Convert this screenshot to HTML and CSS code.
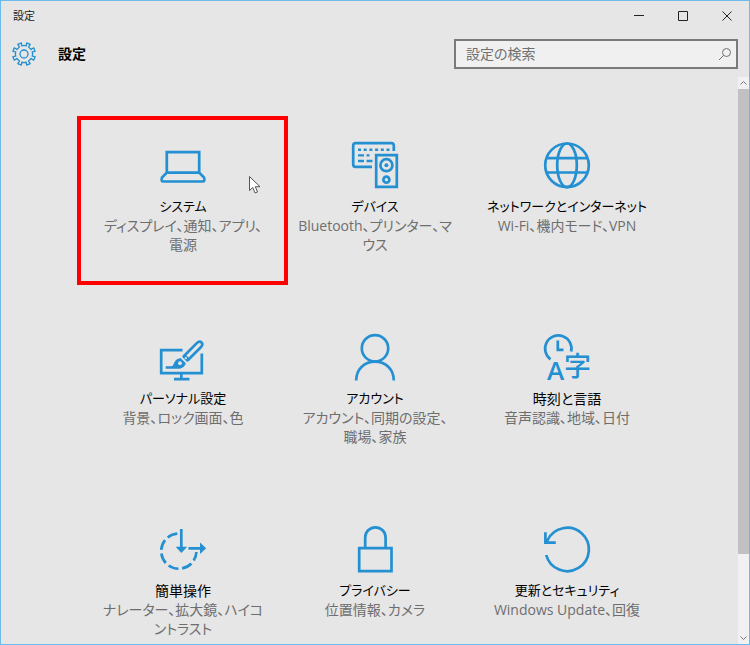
FILE: index.html
```html
<!DOCTYPE html>
<html lang="ja">
<head>
<meta charset="utf-8">
<meta name="viewport" content="width=device-width, initial-scale=1">
<title>設定</title>
<link rel="stylesheet" href="styles.css">
</head>
<body>
<div class="window">
  <div class="titlebar">
    <span class="titlebar-name">設定</span>
    <div class="controls">
      <button class="control" type="button" aria-label="最小化"><svg width="12" height="12" viewBox="0 0 12 12"><path d="M1 5.500h10"/></svg></button>
      <button class="control" type="button" aria-label="最大化"><svg width="12" height="12" viewBox="0 0 12 12"><path d="M1.500 1.500h9v9h-9z"/></svg></button>
      <button class="control" type="button" aria-label="閉じる"><svg width="12" height="12" viewBox="0 0 12 12"><path d="M1.500 1.500l9 9M10.500 1.500l-9 9"/></svg></button>
    </div>
  </div>

  <header class="header">
    <svg class="gear" width="24" height="24" viewBox="0 0 24 24" aria-hidden="true">
      <path d="M9.800 3.800L9.300.9L5.800 2.300L7.500 4.900L4.900 7.500L2.300 5.800L.9 9.300L3.800 9.800Q2.900 12 3.800 14.200L.9 14.700L2.300 18.200L4.900 16.500L7.500 19.100L5.800 21.700L9.300 23.100L9.800 20.200Q12 21.100 14.200 20.200L14.700 23.100L18.200 21.700L16.500 19.100L19.100 16.500L21.700 18.200L23.100 14.700L20.200 14.200Q21.100 12 20.200 9.800L23.100 9.300L21.700 5.800L19.100 7.500L16.500 4.900L18.200 2.300L14.700.9L14.200 3.800Q12 2.900 9.800 3.800Z"/>
      <circle cx="12" cy="12" r="4"/>
    </svg>
    <h1 class="heading">設定</h1>
    <form class="search" role="search">
      <input class="search-input" type="text" placeholder="設定の検索" aria-label="設定の検索">
      <button class="search-button" type="button" aria-label="検索"><svg width="14" height="14" viewBox="0 0 14 14"><circle cx="8.500" cy="5.500" r="4"/><path d="M5.600 8.400L1 13"/></svg></button>
    </form>
  </header>

  <div class="body">
    <main class="tiles">
      <a class="tile tile-marked" href="#">
        <svg class="icon" viewBox="0 0 48 48" aria-hidden="true"><path d="M7.800 11.200h32.400v20.400H7.800zM7.800 31.600L3 36.600Q1.600 40.500 4.500 40.500H43.500Q46.400 40.500 45 36.600L40.200 31.600"/></svg>
        <span class="name name-kana">システム</span>
        <span class="desc">ディスプレイ、通知、アプリ、<br>電源</span>
        <svg class="cursor" width="14" height="20" viewBox="0 0 14 20" aria-hidden="true"><path d="M1.500 1.500V15.500L4.800 12.500L7 18L9.500 17L7.300 11.700H12Z"/></svg>
      </a>
      <a class="tile" href="#">
        <svg class="icon" viewBox="0 0 48 48" aria-hidden="true">
          <path d="M42.800 10V4.500Q42.800 2.200 40.500 2.200H4.500Q2.200 2.200 2.200 4.500V23.500Q2.200 25.800 4.500 25.800H21M25.200 14.200H45.800V45.800H25.200z"/>
          <path class="keys" d="M7 8.700h3m2.700 0h3m2.700 0h3m2.700 0h3m2.700 0h3m2.700 0h3M7 14.400h6m2.500 0h3M7 20h6m2.500 0h6"/>
          <circle cx="35.400" cy="24.200" r="6"/><circle class="solid" cx="35.400" cy="24.200" r="2"/><circle cx="35.400" cy="38.700" r="3"/>
        </svg>
        <span class="name name-kana">デバイス</span>
        <span class="desc">Bluetooth、プリンター、マ<br>ウス</span>
      </a>
      <a class="tile" href="#">
        <svg class="icon" viewBox="0 0 48 48" aria-hidden="true"><circle cx="24" cy="24.300" r="21.800"/><ellipse cx="24" cy="24.300" rx="9.800" ry="21.800"/><path d="M3.500 17.200h41M3.500 31.500h41"/></svg>
        <span class="name name-kana">ネットワークとインターネット</span>
        <span class="desc">Wi-Fi、機内モード、VPN</span>
      </a>
      <a class="tile" href="#">
        <svg class="icon" viewBox="0 0 48 48" aria-hidden="true">
          <path d="M23.500 17.200H2.200V40.200H42.800V20.500M22.300 40v6M15 46.200h15.500"/>
          <path d="M25.500 22.500L37.800 10.100Q40.500 7.500 42.500 9.500T41.800 14.200L29.500 26.500Z"/>
          <path class="solid" d="M6.700 33.200H12.500C15 33 14.500 28.500 18 26.200L21.500 25L26.800 30.200C26 33.500 22.500 36 18 35.800H6.700ZM23 23.800L25.300 21.500L30.500 26.700L28.200 29Z"/>
          <circle class="hole" cx="21" cy="30.200" r="1.900"/><circle class="hole" cx="26.800" cy="25.200" r="1.100"/>
        </svg>
        <span class="name name-kana">パーソナル設定</span>
        <span class="desc">背景、ロック画面、色</span>
      </a>
      <a class="tile" href="#">
        <svg class="icon" viewBox="0 0 48 48" aria-hidden="true"><circle cx="24" cy="15.300" r="13.200"/><path d="M5.200 47.500C5.200 36.500 13 28.700 24 28.700S42.800 36.500 42.800 47.500"/></svg>
        <span class="name name-kana">アカウント</span>
        <span class="desc">アカウント、同期の設定、<br>職場、家族</span>
      </a>
      <a class="tile" href="#">
        <svg class="icon" viewBox="0 0 48 48" aria-hidden="true">
          <path d="M7.500 26.300A13.200 13.200 0 1 1 28.200 18.500M14.800 7.500V16.800H20.500"/>
          <text class="letter" x="12.500" y="46.500">A</text><text class="kanji" x="34.600" y="43">字</text>
        </svg>
        <span class="name">時刻と言語</span>
        <span class="desc">音声認識、地域、日付</span>
      </a>
      <a class="tile" href="#">
        <svg class="icon" viewBox="0 0 48 48" aria-hidden="true">
          <path stroke-dasharray="10.500 3.700" d="M18.300 8.600A17.600 17.600 0 1 0 37.400 27"/>
          <path d="M22.300 4V23M29.500 23.300H42"/>
          <path class="solid" d="M16.600 21.800H28.200L22.400 28ZM41 17.500L47.200 23.300L41 29Z"/>
        </svg>
        <span class="name">簡単操作</span>
        <span class="desc">ナレーター、拡大鏡、ハイコ<br>ントラスト</span>
      </a>
      <a class="tile" href="#">
        <svg class="icon" viewBox="0 0 48 48" aria-hidden="true"><path d="M8.200 23.200H40.500V46.200H8.200zM14.200 23V12.500A10.200 10.200 0 0 1 34.600 12.500V23"/></svg>
        <span class="name name-kana">プライバシー</span>
        <span class="desc">位置情報、カメラ</span>
      </a>
      <a class="tile" href="#">
        <svg class="icon" viewBox="0 0 48 48" aria-hidden="true"><path d="M3.200 30A21.700 21.700 0 1 0 4.500 15.300L3.500 18M2.400 7.300V17.700H12.800"/></svg>
        <span class="name name-kana">更新とセキュリティ</span>
        <span class="desc">Windows Update、回復</span>
      </a>
    </main>
    <div class="scrollbar" aria-hidden="true">
      <svg class="arrow" viewBox="0 0 11 12"><path d="M2.500 7.500l3-3l3 3"/></svg>
      <div class="thumb"></div>
      <div class="track"></div>
      <svg class="arrow" viewBox="0 0 11 12"><path d="M2.500 4.500l3 3l3-3"/></svg>
    </div>
  </div>
</div>
</body>
</html>
```
FILE: styles.css
```css
* { box-sizing: border-box; }

body {
  margin: 0;
  font-family: "Open Sans", "Noto Sans CJK JP", sans-serif;
  font-size: 14px;
  font-feature-settings: "palt";
  color: #000;
  background: #e6e6e6;
}

button { padding: 0; border: 0; background: none; }

svg { fill: none; }

.window {
  display: flex;
  flex-direction: column;
  height: 100vh;
  border: 1px solid #6cbbea;
}

.titlebar {
  display: flex;
  flex: none;
  align-items: center;
  justify-content: space-between;
  height: 30px;
  padding-left: 12px;
}

.titlebar-name {
  padding-bottom: 2px;
  font-size: 11px;
  color: #222;
}

.controls { display: flex; height: 100%; }

.control {
  display: grid;
  place-items: center;
  width: 44px;
  stroke: #222;
}

.header {
  display: flex;
  flex: none;
  align-items: center;
  height: 46px;
  padding: 0 11px;
}

.gear { stroke: #2490d2; stroke-width: 1.3; stroke-linejoin: round; }

.heading {
  margin: 0 auto 0 22px;
  padding-bottom: 2px;
  font-size: 14px;
  font-weight: 700;
}

.search {
  display: flex;
  width: 284px;
  height: 30px;
  border: 2px solid #7a7a7a;
  background: #f0f0f0;
}

.search-input {
  flex: 1;
  min-width: 0;
  padding: 0 10px 2px;
  border: 0;
  outline: 0;
  background: none;
  font: inherit;
  font-feature-settings: inherit;
}

.search-input::placeholder { color: #707070; opacity: 1; }

.search-button {
  display: grid;
  place-items: center;
  width: 22px;
  stroke: #707070;
}

.body { display: flex; flex: 1; min-height: 0; }

.tiles {
  display: grid;
  flex: 1;
  grid-template-columns: repeat(auto-fit, 192px);
  grid-auto-rows: 192px;
  justify-content: center;
  padding: 48px 0 0 11px;
  overflow: hidden;
}

.tile {
  position: relative;
  display: flex;
  flex-direction: column;
  align-items: center;
  padding-top: 16px;
  color: inherit;
  text-align: center;
  text-decoration: none;
}

/* Callout frame around the highlighted category */
.tile-marked::after {
  content: "";
  position: absolute;
  inset: -9px -9px 32px -10px;
  border: 4px solid #f00;
}

.cursor {
  position: absolute;
  top: 50px;
  left: 161px;
  fill: #fff;
  stroke: #555;
}

.icon {
  width: 48px;
  height: 48px;
  margin-bottom: 8px;
  overflow: visible;
  stroke: #2490d2;
  stroke-width: 2.7;
}

.icon .solid { fill: #2490d2; stroke: none; }
.icon .hole { fill: #e6e6e6; stroke: none; }
.icon .keys { stroke-width: 2.4; }
.icon text { fill: #2490d2; stroke: none; text-anchor: middle; }
.icon .letter { font: 600 26px "Open Sans", sans-serif; }
.icon .kanji { font: 500 27px "Noto Sans CJK JP", sans-serif; }

.name { line-height: 19px; white-space: nowrap; }

.name-kana { font-size: 13px; }

.desc {
  line-height: 19px;
  color: #6e6e6e;
  white-space: nowrap;
}

.scrollbar {
  display: flex;
  flex-direction: column;
  width: 11px;
  background: #f1f1f1;
}

.arrow { flex: none; height: 12px; stroke: #777; }

.thumb { flex: 6; background: #c1c1c1; }

.track { flex: 1; }
```
